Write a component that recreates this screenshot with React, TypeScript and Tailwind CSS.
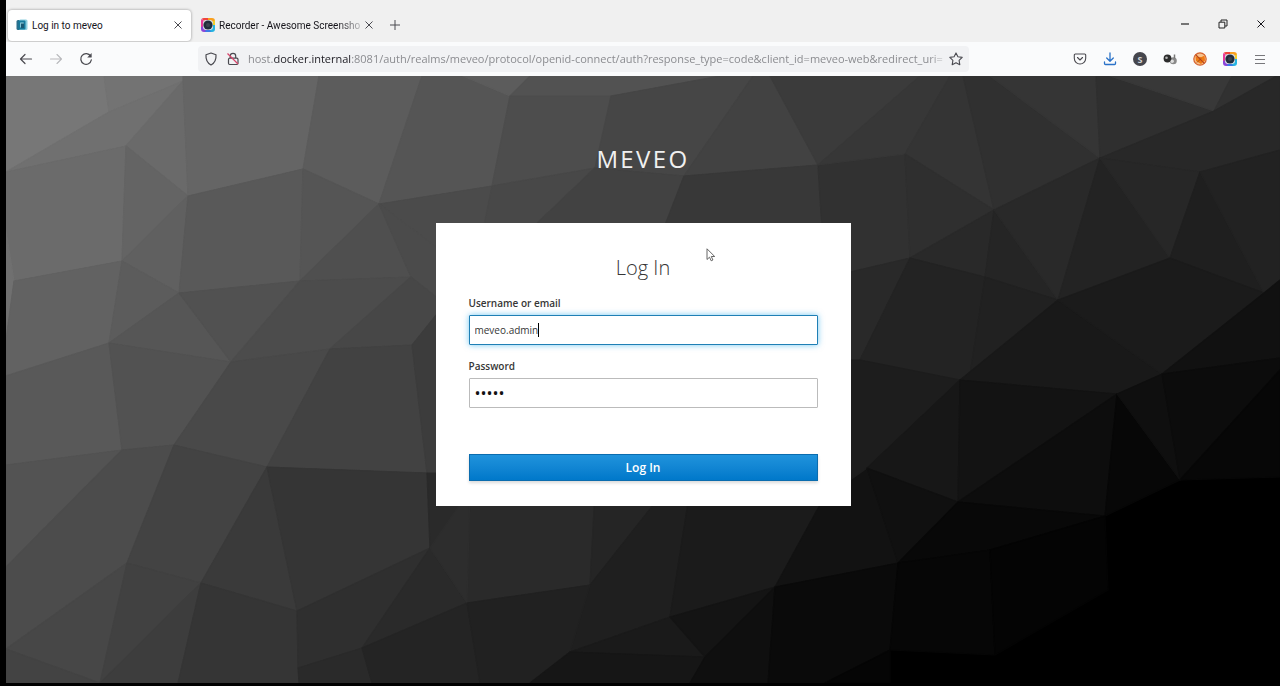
import React from "react";

type Facet = [points: string, fill: string];

const FACETS: Facet[] = [
  // upper left
  ["6,76 104,76 109,112 6,172", "#777777"],
  ["104,76 183,76 183,81 109,112", "#737373"],
  ["183,81 109,112 6,172 126,146", "#707070"],
  ["183,81 126,146 188,196", "#6a6a6a"],
  ["6,172 126,146 122,261 14,281 6,230", "#6b6b6b"],
  ["6,230 14,281 6,340", "#707070"],
  ["126,146 188,196 122,261", "#646464"],
  ["183,81 183,76 319,76 303,169 188,196", "#656565"],
  ["319,76 422,76 379,204 303,169", "#5c5c5c"],
  ["188,196 122,261 179,293", "#606060"],
  ["188,196 303,169 300,281 179,293", "#595959"],
  ["303,169 379,204 300,281", "#555555"],
  ["379,204 300,281 411,277", "#4f4f4f"],
  ["422,76 463,76 510,96 492,186 379,204", "#555555"],
  ["379,204 492,186 520,183 485,223 440,250", "#4b4b4b"],
  ["379,204 440,250 440,300 411,277", "#4b4b4b"],
  ["14,281 122,261 109,343 6,376 6,340", "#626262"],
  ["122,261 179,293 109,343", "#5c5c5c"],
  ["109,343 179,293 231,362", "#565656"],
  ["179,293 300,281 231,362", "#515151"],
  ["300,281 411,277 330,349 231,362", "#4c4c4c"],
  ["411,277 440,300 440,310 412,345 330,349", "#474747"],
  ["6,376 109,343 122,450 6,465", "#595959"],
  ["109,343 231,362 174,445 122,450", "#525252"],
  ["231,362 330,349 267,467 174,445", "#494949"],
  ["330,349 412,345 427,473 267,467", "#424242"],
  ["412,345 440,310 440,473 427,473", "#3c3c3c"],
  // lower left
  ["6,465 122,450 6,567", "#535353"],
  ["122,450 174,445 127,563 6,649 6,567", "#4c4c4c"],
  ["174,445 267,467 201,583 127,563", "#434343"],
  ["267,467 297,611 201,583", "#3a3a3a"],
  ["267,467 427,473 430,548 297,611", "#353535"],
  ["6,649 127,563 106,683 100,683", "#474747"],
  ["6,649 100,683 6,683", "#434343"],
  ["127,563 201,583 100,683", "#414141"],
  ["201,583 178,683 100,683", "#3d3d3d"],
  ["201,583 297,611 299,683 178,683", "#353535"],
  ["297,611 430,548 362,648 298,668", "#2f2f2f"],
  ["430,548 467,603 362,648", "#2a2a2a"],
  ["298,668 362,648 372,683 299,683", "#2a2a2a"],
  ["362,648 467,603 480,683 372,683", "#242424"],
  // behind and around the form, top
  ["463,76 530,76 510,96", "#5c5c5c"],
  ["530,76 720,76 611,96 510,96", "#525252"],
  ["510,96 611,96 603,157 595,168 492,186", "#4d4d4d"],
  ["492,186 595,168 530,230 483,230", "#484848"],
  ["611,96 720,76 753,76 684,176 595,168", "#464646"],
  ["595,168 684,176 665,230 530,230", "#424242"],
  ["753,76 770,76 818,165 684,176", "#424242"],
  ["770,76 920,76 818,165", "#3b3b3b"],
  ["684,176 818,165 822,230 663,230", "#383838"],
  ["818,165 905,154 910,258 850,272 822,230", "#313131"],
  ["920,76 950,76 905,154 818,165", "#373737"],
  // behind and around the form, bottom
  ["427,473 600,473 595,510 590,585 467,603 430,548", "#2a2a2a"],
  ["430,548 470,490 467,603", "#2d2d2d"],
  ["595,490 665,490 590,585", "#252525"],
  ["665,490 690,490 670,617 570,652 590,585", "#1f1f1f"],
  ["467,603 590,585 570,652 530,683 480,683", "#212121"],
  ["690,490 828,490 775,587 670,617", "#1b1b1b"],
  ["570,652 670,617 705,657", "#1a1a1a"],
  ["570,652 705,657 690,683 530,683", "#161616"],
  ["670,617 775,587 705,657", "#141414"],
  ["775,587 768,683 690,683 705,657", "#0f0f0f"],
  ["828,490 867,468 898,563 775,587", "#121212"],
  ["775,587 898,563 890,650 825,683 768,683", "#0a0a0a"],
  // upper right
  ["950,76 963,76 994,210 905,154", "#343434"],
  ["963,76 990,76 1100,158 994,210", "#303030"],
  ["990,76 1096,76 1100,158", "#353535"],
  ["1096,76 1110,76 1214,111 1100,158", "#2f2f2f"],
  ["1110,76 1232,76 1214,111", "#383838"],
  ["1232,76 1280,76 1214,111", "#313131"],
  ["1214,111 1280,74 1280,150 1200,172 1100,158", "#282828"],
  ["905,154 994,210 910,258", "#2f2f2f"],
  ["994,210 910,258 985,277", "#292929"],
  ["994,210 985,277 1058,300", "#252525"],
  ["994,210 1100,158 1058,300", "#292929"],
  ["1100,158 1170,258 1058,300", "#232323"],
  ["1100,158 1200,172 1170,258", "#272727"],
  ["1200,172 1264,293 1170,258", "#1f1f1f"],
  ["1200,172 1280,150 1280,280 1264,293", "#222222"],
  ["850,272 910,258 860,360 850,360", "#292929"],
  ["910,258 985,277 970,375 960,380 860,360", "#232323"],
  ["985,277 1058,300 970,375", "#212121"],
  ["850,360 860,360 960,380 867,468 850,480", "#1d1d1d"],
  ["1058,300 1162,374 1117,394 960,380", "#191919"],
  ["1058,300 1170,258 1264,293 1162,374", "#1b1b1b"],
  ["1264,293 1280,280 1280,358 1162,374", "#111111"],
  // lower right
  ["960,380 867,468 958,502", "#171717"],
  ["960,380 1117,394 958,502", "#131313"],
  ["867,468 958,502 898,563", "#101010"],
  ["1117,394 958,502 1105,516", "#0d0d0d"],
  ["1117,394 1180,480 1105,516", "#070707"],
  ["1117,394 1162,374 1180,480", "#0f0f0f"],
  ["1162,374 1280,358 1280,370 1180,480", "#0c0c0c"],
  ["1280,370 1280,477 1180,480", "#070707"],
  ["958,502 1105,516 990,550 898,563", "#080808"],
  ["898,563 990,550 995,655 890,650", "#060606"],
  ["990,550 1105,516 1108,590 995,655", "#040404"],
  ["890,650 825,683 890,683", "#050505"],
];

function Backdrop() {
  return (
    <svg
      className="absolute inset-0 h-full w-full"
      viewBox="6 76 1274 607"
      preserveAspectRatio="xMidYMid slice"
      aria-hidden="true"
    >
      {FACETS.map(([points, fill]) => (
        <polygon key={points} points={points} fill={fill} stroke={fill} strokeWidth="1.2" strokeLinejoin="round" />
      ))}
    </svg>
  );
}

function MeveoIcon() {
  return (
    <svg className="size-3 shrink-0" viewBox="0 0 12 12" aria-hidden="true">
      <rect x="0.5" y="1" width="8" height="10" rx="1.5" fill="#2b6f8c" />
      <rect x="3" y="0.5" width="8.500" height="10.500" rx="1.5" fill="#8fcfe0" />
      <rect x="2.5" y="1.500" width="7" height="9" rx="1" fill="#177a9c" />
      <path d="M4.2 3.5h3.500v5H4.200z" fill="#9fd8e6" />
      <path d="M5 4.5h3v4.600H5z" fill="#1b5873" />
    </svg>
  );
}

function RecorderIcon({ className, id }: { className: string; id: string }) {
  return (
    <svg className={className} viewBox="0 0 14 14" aria-hidden="true">
      <defs>
        <clipPath id={id}>
          <rect width="14" height="14" rx="3" />
        </clipPath>
      </defs>
      <g clipPath={`url(#${id})`}>
        <path d="M7 7 0 0h8z" fill="#f0443e" />
        <path d="M7 7 7 0h7v3z" fill="#f9a01f" />
        <path d="M7 7 14 2v6z" fill="#f3cf2a" />
        <path d="M7 7 14 7v7H9z" fill="#26b4e0" />
        <path d="M7 7 10 14H3z" fill="#3a7be8" />
        <path d="M7 7 4 14H0V8z" fill="#8b45d8" />
        <path d="M7 7 0 9V0z" fill="#e8389a" />
      </g>
      <rect x="2" y="2" width="10" height="10" rx="3" fill="#d9dde4" />
      <circle cx="7" cy="7" r="4.600" fill="#202c3c" />
      <circle cx="7" cy="7" r="2" fill="#3a4450" />
    </svg>
  );
}

function CloseIcon({ className }: { className: string }) {
  return (
    <svg className={className} viewBox="0 0 10 10" fill="none" stroke="currentColor" aria-hidden="true">
      <path d="m1.5 1.5 7 7M8.5 1.5l-7 7" />
    </svg>
  );
}

function TabBar() {
  return (
    <div className="flex h-[42px] items-center bg-[#f0f0f0] pl-0.5 font-['Roboto','Open_Sans',sans-serif] text-[#15141a]">
      <div className="mt-2 flex h-[31px] w-[183px] items-center gap-1 rounded-sm bg-white px-2 shadow-[0_0_3px_rgba(0,0,0,0.4)]">
        <MeveoIcon />
        <span className="flex-1 text-[10px] whitespace-nowrap">Log in to meveo</span>
        <button type="button" aria-label="Close tab" className="text-[#4a4a50]">
          <CloseIcon className="size-[10px]" />
        </button>
      </div>
      <div className="mt-2 ml-2.5 flex h-[31px] w-[168px] items-center gap-1">
        <RecorderIcon className="size-[14px] shrink-0" id="tab-recorder" />
        <span className="flex-1 text-[10px] whitespace-nowrap [mask-image:linear-gradient(to_right,black_84%,rgba(0,0,0,0.25))]">
          Recorder - Awesome Screensho
        </span>
        <button type="button" aria-label="Close tab" className="text-[#4a4a50]">
          <CloseIcon className="size-[10px]" />
        </button>
      </div>
      <button type="button" aria-label="New tab" className="mt-2 ml-5 text-[#4a4a50]">
        <svg className="size-3" viewBox="0 0 12 12" fill="none" stroke="currentColor" aria-hidden="true">
          <path d="M6 1v10M1 6h10" />
        </svg>
      </button>
      <div className="mt-1.5 mr-3.5 ml-auto flex items-center gap-7">
        <button type="button" aria-label="Minimize">
          <svg className="size-[10px]" viewBox="0 0 10 10" aria-hidden="true">
            <path d="M1 5h8" stroke="#111" strokeWidth="1.1" />
          </svg>
        </button>
        <button type="button" aria-label="Restore">
          <svg className="size-[10px]" viewBox="0 0 10 10" fill="none" stroke="#222" aria-hidden="true">
            <path d="M1 3.200h5.800V9H1zM3 3V1h6v6H7" />
          </svg>
        </button>
        <button type="button" aria-label="Close window">
          <CloseIcon className="size-[10px]" />
        </button>
      </div>
    </div>
  );
}

function Toolbar() {
  return (
    <div className="flex h-[34px] items-center bg-[#fafbfc] pr-[13px] pl-[13px] text-[#4a4a50]">
      <div className="flex w-[179px] shrink-0 items-center gap-4">
        <button type="button" aria-label="Back">
          <svg className="size-3.5" viewBox="0 0 14 14" fill="none" stroke="currentColor" strokeWidth="1.2" strokeLinecap="round" strokeLinejoin="round" aria-hidden="true">
            <path d="M12.5 7h-11M6 2.5 1.5 7 6 11.5" />
          </svg>
        </button>
        <button type="button" aria-label="Forward" className="text-[#b9b9bc]">
          <svg className="size-3.5" viewBox="0 0 14 14" fill="none" stroke="currentColor" strokeWidth="1.1" strokeLinecap="round" strokeLinejoin="round" aria-hidden="true">
            <path d="M1.5 7h11M8 2.5 12.5 7 8 11.5" />
          </svg>
        </button>
        <button type="button" aria-label="Reload">
          <svg className="size-3.5" viewBox="0 0 14 14" fill="none" stroke="currentColor" strokeWidth="1.3" strokeLinecap="round" aria-hidden="true">
            <path d="M11.6 4.2A5.3 5.3 0 1 0 12.3 8" />
            <path d="M12.6 1v4.4H8.2z" fill="currentColor" stroke="none" />
          </svg>
        </button>
      </div>
      <div className="flex h-[26px] w-[771px] items-center rounded-sm bg-[#f1f2f4] px-1.5">
        <svg className="size-3.5 shrink-0" viewBox="0 0 14 14" fill="none" stroke="currentColor" strokeWidth="1.2" strokeLinejoin="round" aria-hidden="true">
          <path d="M7 1 12 2.800c.3 4-.8 8-5 10.200C2.800 10.800 1.700 6.800 2 2.800z" />
        </svg>
        <svg className="ml-2 size-3.5 shrink-0" viewBox="0 0 14 14" fill="none" stroke="currentColor" strokeWidth="1.2" aria-hidden="true">
          <path d="M4.300 6V4a2.700 2.700 0 0 1 5.400 0v2" />
          <rect x="2.500" y="6.200" width="9.500" height="6.300" rx="1.200" />
          <path d="m1.500 1.500 10.500 10.500" stroke="#d7456b" />
        </svg>
        <div className="ml-2 flex-1 text-[11px] whitespace-nowrap text-[#8b8c90] [mask-image:linear-gradient(to_right,black_97%,rgba(0,0,0,0.3))]">
          host.<span className="text-[#1c1b22]">docker.internal</span>
          :8081/auth/realms/meveo/protocol/openid-connect/auth?response_type=code&amp;client_id=meveo-web&amp;redirect_uri=
        </div>
        <button type="button" aria-label="Bookmark this page">
          <svg className="size-3.5" viewBox="0 0 14 14" fill="none" stroke="currentColor" strokeWidth="1.1" strokeLinejoin="round" aria-hidden="true">
            <path d="m7 .9 1.900 3.900 4.300.6-3.100 3 .7 4.300L7 10.700l-3.800 2 .7-4.300-3.100-3 4.300-.6z" />
          </svg>
        </button>
      </div>
      <div className="ml-auto flex items-center gap-4">
        <button type="button" aria-label="Save to Pocket">
          <svg className="size-3.5" viewBox="0 0 14 14" fill="none" stroke="currentColor" strokeWidth="1.1" strokeLinecap="round" strokeLinejoin="round" aria-hidden="true">
            <path d="M2.300 2h9.400a1 1 0 0 1 1 1v3.300a5.700 5.700 0 0 1-11.400 0V3a1 1 0 0 1 1-1z" />
            <path d="M4.500 5.500 7 8l2.500-2.500" />
          </svg>
        </button>
        <button type="button" aria-label="Downloads" className="text-[#2a72c8]">
          <svg className="size-3.5" viewBox="0 0 14 14" fill="none" stroke="currentColor" strokeWidth="1.300" strokeLinecap="round" strokeLinejoin="round" aria-hidden="true">
            <path d="M7 1v8M3.700 6 7 9.200 10.300 6M1.500 10v1.500a1 1 0 0 0 1 1h9a1 1 0 0 0 1-1V10" />
          </svg>
        </button>
        <button
          type="button"
          aria-label="Account S"
          className="flex size-3.5 items-center justify-center rounded-full bg-[#45464d] text-[9px] leading-none font-bold text-[#d4d4d6]"
        >
          S
        </button>
        <button type="button" aria-label="Extension">
          <svg className="size-3.5" viewBox="0 0 14 14" aria-hidden="true">
            <circle cx="10.300" cy="8.800" r="3.500" fill="#8a8a8a" />
            <path d="M11.500 2.500v4" stroke="#777" strokeWidth="1.500" />
            <circle cx="4.500" cy="6.500" r="3.900" fill="#2c2c2c" />
            <circle cx="3.500" cy="5.800" r="1.300" fill="#b5b5b5" />
            <circle cx="9.200" cy="9.200" r="1.700" fill="#dedede" />
          </svg>
        </button>
        <button type="button" aria-label="Blocked extension">
          <svg className="size-3.5" viewBox="0 0 14 14" aria-hidden="true">
            <circle cx="7" cy="7" r="6.200" fill="#f7c28c" stroke="#d4622f" strokeWidth="1.200" />
            <path d="m2.500 4 2.800 1h3.400l2.800-1.500.5 5-4 3.500L3 9z" fill="#ee7a14" />
            <path d="m2.700 2.700 8.600 8.600" stroke="#b5431c" strokeWidth="1.100" />
            <path d="m4 10.500 4-4" stroke="#a04a18" />
          </svg>
        </button>
        <RecorderIcon className="size-3.5" id="bar-recorder" />
        <button type="button" aria-label="Menu" className="text-[#77777b]">
          <svg className="size-3.5" viewBox="0 0 14 14" fill="none" stroke="currentColor" aria-hidden="true">
            <path d="M2 3.500h10M2 7.500h10M2 11.500h10" />
          </svg>
        </button>
      </div>
    </div>
  );
}

function LoginCard() {
  return (
    <form
      className="relative w-full max-w-[415px] bg-white px-[33px] pt-8 pb-[25px] text-[#363636]"
      onSubmit={(event) => event.preventDefault()}
    >
      <h1 className="text-center text-xl leading-[26px] font-light">Log In</h1>
      <label htmlFor="username" className="mt-3.5 block text-[10px] leading-4 font-semibold">
        Username or email
      </label>
      <div className="relative mt-1">
        <input
          id="username"
          type="text"
          defaultValue="meveo.admin"
          className="block h-[30px] w-full rounded-[1px] border border-[#1f7fb5] bg-white px-[5px] text-[10px] shadow-[0_0_6px_rgba(0,153,230,0.55)] outline-none"
        />
        <span className="absolute top-2 left-[69px] h-3.5 w-px bg-black" />
      </div>
      <label htmlFor="password" className="mt-[13px] block text-[10px] leading-4 font-semibold">
        Password
      </label>
      <input
        id="password"
        type="password"
        defaultValue="xxxxx"
        className="mt-1 block h-[30px] w-full rounded-[1px] border border-[#bbbbbb] bg-white px-[5px] text-base text-[#111] outline-none"
      />
      <button
        type="submit"
        className="mt-[46px] block h-[27px] w-full border border-[#0b6cae] bg-linear-to-b from-[#1f93dc] to-[#0078ca] text-xs font-semibold text-white shadow-[0_2px_3px_rgba(3,3,3,0.15)]"
      >
        Log In
      </button>
      <svg className="absolute top-[25px] left-[270px] h-[14px] w-[10px]" viewBox="0 0 10 14" aria-hidden="true">
        <path d="M1 .8v10.700l2.500-2.300 1.700 3.600 1.700-.8-1.600-3.500h3.400z" fill="#fff" stroke="#555" strokeWidth="0.900" />
      </svg>
    </form>
  );
}

export default function App() {
  return (
    <div className="flex min-h-screen flex-col bg-black pb-[3px] pl-1.5 font-['Open_Sans','Noto_Sans',sans-serif]">
      <TabBar />
      <Toolbar />
      <main className="relative flex flex-1 flex-col items-center overflow-hidden bg-black pt-[66px]">
        <Backdrop />
        <div className="relative text-2xl leading-[34px] tracking-widest text-[#f0f0f0] uppercase">Meveo</div>
        <div className="mt-[47px] flex w-full justify-center">
          <LoginCard />
        </div>
      </main>
    </div>
  );
}
